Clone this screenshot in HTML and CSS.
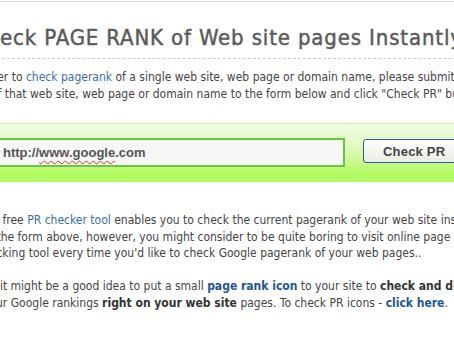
FILE: index.html
```html
<!DOCTYPE html>
<html lang="en">

<head>
    <meta charset="UTF-8">
    <meta name="viewport" content="width=device-width, initial-scale=1.0">
    <title>Check PageRank</title>
    <link rel="stylesheet" href="styles.css">
</head>

<body>

    <div class="page">
        <div class="content">
            <h1 class="title">Check PAGE RANK of Web site pages Instantly</h1>

            <p class="intro">
                In order to <a href="#">check pagerank</a> of a single web site, web page or domain name, please submit the<br>
                URL of that web site, web page or domain name to the form below and click "Check PR" button.
            </p>
        </div>

        <form class="check-form" action="#">
            <div class="content form-row">
                <div class="url-box">http://<span class="typo">www.google</span>.com</div>
                <button type="button" class="btn-check">Check PR</button>
            </div>
        </form>

        <div class="content">
            <p class="text text-first">
                This free <a href="#">PR checker tool</a> enables you to check the current pagerank of your web site instantly<br>
                via the form above, however, you might consider to be quite boring to visit online page rank<br>
                checking tool every time you'd like to check Google pagerank of your web pages..
            </p>

            <p class="text text-second">
                So it might be a good idea to put a small <a href="#" class="strong-link">page rank icon</a> to your site to <b>check and display</b><br>
                your Google rankings <b>right on your web site</b> pages. To check PR icons - <a href="#" class="strong-link">click here</a>.
            </p>
        </div>
    </div>

</body>

</html>
```

FILE: styles.css
```css
/* reset START */
* {
    margin: 0;
    padding: 0;
    box-sizing: border-box;
}

body {
    background: #ffffff;
    overflow: hidden;
    font-family: "DejaVu Sans", Verdana, sans-serif;
    color: #444444;
}

a {
    color: #3a6ea8;
    text-decoration: none;
}

/* reset END */

/* page START */
.page {
    width: 454px;
    border-top: 1px solid #dddddd;
    margin-top: 1px;
}

.content {
    margin-left: -28px;
    width: 700px;
}

/* page END */

/* title START */
.title {
    font-size: 22px;
    font-weight: normal;
    letter-spacing: 0.85px;
    -webkit-text-stroke: 0.45px #5a5a5a;
    color: #5a5a5a;
    line-height: 26px;
    padding-top: 23px;
    padding-bottom: 7px;
    border-bottom: 1px dashed #cccccc;
    white-space: nowrap;
    font-stretch: condensed;
}

/* title END */

/* text START */
.intro,
.text {
    font-size: 12px;
    line-height: 16.5px;
    white-space: nowrap;
    font-stretch: condensed;
}

.intro {
    padding-top: 10px;
    margin-left: -6px;
}

.text {
    margin-bottom: 16.5px;
}

.text-first {
    margin-left: 5px;
}

.text-second {
    margin-left: 11px;
}

.strong-link {
    font-weight: bold;
    color: #1f5596;
}

b {
    color: #333333;
}

/* text END */

/* form START */
.check-form {
    margin-top: 21px;
    margin-bottom: 30px;
    height: 59px;
    border-top: 1px solid #c9f39c;
    background: linear-gradient(#f3fde6, #dcf9b8 45%, #b3fb63 85%);
}

.form-row {
    display: flex;
    align-items: flex-start;
    padding-top: 14px;
}

.url-box {
    width: 373px;
    height: 29px;
    border: 2px solid #6cc63b;
    background: #f7f7f7;
    padding-left: 29px;
    font-family: "Liberation Sans", Arial, sans-serif;
    font-weight: bold;
    font-size: 13px;
    line-height: 25px;
    color: #555555;
}

.typo {
    text-decoration: underline wavy #e03030;
    text-decoration-thickness: 1px;
    text-underline-offset: 3px;
}

.btn-check {
    margin-left: 18px;
    margin-top: 1px;
    width: 130px;
    height: 24px;
    border: 1px solid #2e5b95;
    border-radius: 3px;
    background: linear-gradient(#fdfdfd, #ebebe4);
    font-family: "Liberation Sans", Arial, sans-serif;
    font-weight: bold;
    font-size: 13px;
    letter-spacing: 0.2px;
    color: #444444;
    text-align: left;
    padding-left: 19px;
}

/* form END */
```
